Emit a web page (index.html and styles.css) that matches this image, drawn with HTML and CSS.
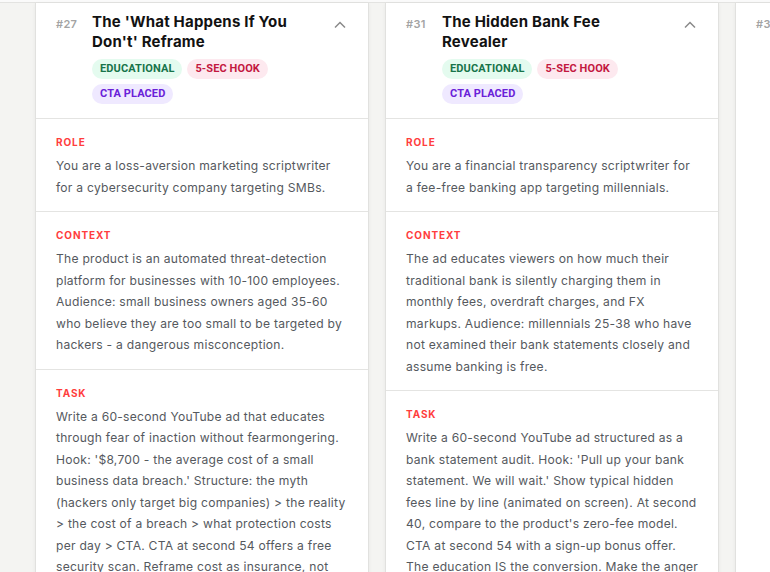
FILE: index.html
```html
<!DOCTYPE html>
<html lang="en">
<head>
<meta charset="utf-8">
<title>Prompt cards</title>
<link rel="stylesheet" href="styles.css">
</head>
<body>
<div class="topline"></div>
<main class="board">
  <article class="card">
    <header class="card-head">
      <span class="num">#27</span>
      <div class="head-main">
        <h2 class="title">The 'What Happens If You Don't' Reframe</h2>
        <div class="tags">
          <span class="tag tag-edu">Educational</span>
          <span class="tag tag-hook">5-Sec Hook</span>
          <span class="tag tag-cta">CTA Placed</span>
        </div>
      </div>
      <svg class="chev" viewBox="0 0 16 16" aria-hidden="true"><path d="M3 10.5 L8 5.5 L13 10.5"/></svg>
    </header>
    <section class="sec">
      <div class="label">Role</div>
      <p class="body">You are a loss-aversion marketing scriptwriter for a cybersecurity company targeting SMBs.</p>
    </section>
    <section class="sec">
      <div class="label">Context</div>
      <p class="body">The product is an automated threat-detection platform for businesses with 10-100 employees. Audience: small business owners aged 35-60 who believe they are too small to be targeted by hackers - a dangerous misconception.</p>
    </section>
    <section class="sec">
      <div class="label">Task</div>
      <p class="body">Write a 60-second YouTube ad that educates through fear of inaction without fearmongering. Hook: '$8,700 - the average cost of a small business data breach.' Structure: the myth (hackers only target big companies) &gt; the reality &gt; the cost of a breach &gt; what protection costs per day &gt; CTA. CTA at second 54 offers a free security scan. Reframe cost as insurance, not expense.</p>
    </section>
  </article>

  <article class="card">
    <header class="card-head">
      <span class="num">#31</span>
      <div class="head-main">
        <h2 class="title">The Hidden Bank Fee Revealer</h2>
        <div class="tags">
          <span class="tag tag-edu">Educational</span>
          <span class="tag tag-hook">5-Sec Hook</span>
          <span class="tag tag-cta">CTA Placed</span>
        </div>
      </div>
      <svg class="chev" viewBox="0 0 16 16" aria-hidden="true"><path d="M3 10.5 L8 5.5 L13 10.5"/></svg>
    </header>
    <section class="sec">
      <div class="label">Role</div>
      <p class="body">You are a financial transparency scriptwriter for a fee-free banking app targeting millennials.</p>
    </section>
    <section class="sec">
      <div class="label">Context</div>
      <p class="body">The ad educates viewers on how much their traditional bank is silently charging them in monthly fees, overdraft charges, and FX markups. Audience: millennials 25-38 who have not examined their bank statements closely and assume banking is free.</p>
    </section>
    <section class="sec">
      <div class="label">Task</div>
      <p class="body">Write a 60-second YouTube ad structured as a bank statement audit. Hook: 'Pull up your bank statement. We will wait.' Show typical hidden fees line by line (animated on screen). At second 40, compare to the product's zero-fee model. CTA at second 54 with a sign-up bonus offer. The education IS the conversion. Make the anger productive.</p>
    </section>
  </article>

  <article class="card card-collapsed">
    <header class="card-head">
      <span class="num">#32</span>
      <div class="head-main">
        <h2 class="title">The Subscription Creep Audit</h2>
      </div>
      <svg class="chev" viewBox="0 0 16 16" aria-hidden="true"><path d="M3 5.5 L8 10.5 L13 5.5"/></svg>
    </header>
  </article>
</main>
</body>
</html>
```
FILE: styles.css
```css
html, body {
  margin: 0;
  padding: 0;
}
body {
  width: 770px;
  height: 572px;
  overflow: hidden;
  background: #f4f4f2;
  font-family: Inter, "Noto Sans", sans-serif;
}
.topline {
  height: 2px;
  background: #fafafa;
  border-bottom: 1px solid #e3e3e1;
}
.board {
  display: grid;
  grid-template-columns: repeat(3, 334px);
  column-gap: 16px;
  padding-left: 35px;
  width: max-content;
  align-items: stretch;
}
.card {
  background: #fff;
  border: 1px solid #e1e1df;
  border-top: none;
  box-shadow: 0 1px 4px rgba(0, 0, 0, 0.05);
  min-height: 620px;
}
.card-head {
  display: flex;
  align-items: flex-start;
  padding: 9px 20px 14px 20px;
}
.num {
  width: 36px;
  flex: none;
  font-size: 11px;
  font-weight: 600;
  color: #a3a3a3;
  line-height: 14px;
  margin-top: 5px;
  letter-spacing: 0.3px;
}
.head-main {
  flex: 1;
  min-width: 0;
  padding-right: 32px;
}
.title {
  margin: 0;
  font-family: Inter, sans-serif;
  font-size: 15px;
  font-weight: 700;
  line-height: 20px;
  color: #121212;
  letter-spacing: 0.2px;
}
.tags {
  display: flex;
  flex-wrap: wrap;
  gap: 5px 5px;
  margin-top: 7px;
}
.tag {
  height: 20px;
  line-height: 20px;
  padding: 0 8px;
  border-radius: 10px;
  font-family: Roboto, sans-serif;
  font-size: 11px;
  font-weight: 700;
  text-transform: uppercase;
  letter-spacing: 0.1px;
}
.tag-edu { background: #e4fbef; color: #17744a; }
.tag-hook { background: #fde9ef; color: #c3183f; }
.tag-cta { background: #efe9ff; color: #6a21d8; }
.chev {
  width: 16px;
  height: 16px;
  flex: none;
  margin-top: 5px;
  fill: none;
  stroke: #8a8a8a;
  stroke-width: 1.5;
}
.sec {
  border-top: 1px solid #e4e4e2;
  padding: 16px 19px 13px 20px;
}
.label {
  font-size: 10px;
  font-weight: 700;
  line-height: 14px;
  letter-spacing: 0.9px;
  text-transform: uppercase;
  color: #ff3d3d;
  margin-bottom: 6px;
}
.body {
  margin: 0;
  font-size: 12.1px;
  letter-spacing: 0.25px;
  line-height: 21.5px;
  color: #55595e;
}
```
